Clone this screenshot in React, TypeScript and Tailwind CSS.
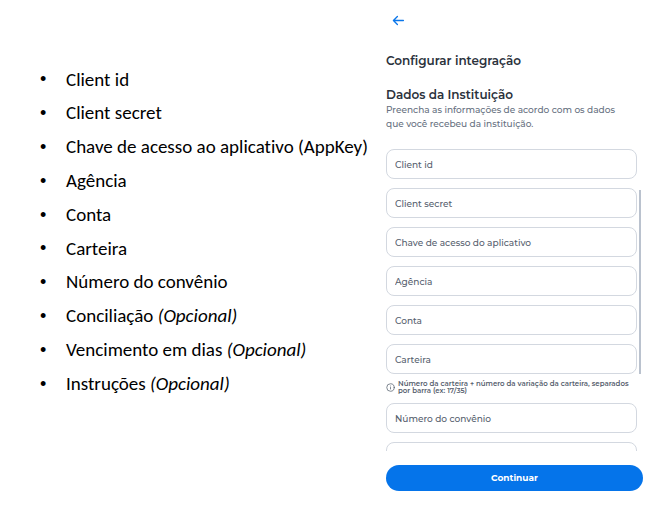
import { Info } from 'lucide-react';

const items: { text: string; optional?: boolean }[] = [
  { text: 'Client id' },
  { text: 'Client secret' },
  { text: 'Chave de acesso ao aplicativo (AppKey)' },
  { text: 'Agência' },
  { text: 'Conta' },
  { text: 'Carteira' },
  { text: 'Número do convênio' },
  { text: 'Conciliação', optional: true },
  { text: 'Vencimento em dias', optional: true },
  { text: 'Instruções', optional: true },
];

function Field({ label, hint }: { label: string; hint?: string }) {
  return (
    <div className="shrink-0">
      <input
        type="text"
        aria-label={label || 'Conciliação'}
        placeholder={label}
        className="block h-[30px] w-full rounded-lg border border-[#d3d8e0] bg-white px-2 text-[9px] font-medium text-[#56606e] placeholder:text-[#56606e] outline-none"
      />
      {hint && (
        <p className="flex items-center gap-[3px] pt-[6px] text-[7px] leading-[7px] font-semibold text-[#56606e]">
          <Info className="size-[9px] shrink-0" />
          <span>{hint}</span>
        </p>
      )}
    </div>
  );
}

export default function App() {
  return (
    <div className="flex h-screen bg-white">
      <ul className="grid h-[401px] min-w-0 flex-1 auto-rows-fr pt-[63px] pl-10 font-['Carlito','Lato',sans-serif] text-[19px] whitespace-nowrap text-black [font-variant-ligatures:none]">
        {items.map((item) => (
          <li key={item.text} className="flex items-center">
            <span className="w-[26px] font-['Liberation_Sans',sans-serif] text-[18px]">•</span>
            <span>
              {item.text}
              {item.optional && <em> (Opcional)</em>}
            </span>
          </li>
        ))}
      </ul>

      <main className="mr-[27px] flex w-[257px] shrink-0 flex-col pt-3 pb-[29px] font-['Montserrat','Inter',sans-serif]">
        <button type="button" aria-label="Voltar" className="ml-1 flex size-4 items-center justify-center text-[#0a76ea]">
          <svg viewBox="0 0 16 16" className="size-4" fill="none" stroke="currentColor" strokeWidth="1.3" strokeLinecap="round" strokeLinejoin="round">
            <path d="M13.4 8.5H3.4M7.4 4.5l-4 4 4 4" />
          </svg>
        </button>
        <h1 className="mt-[25px] text-[12px] leading-4 font-semibold text-[#2b323c]">Configurar integração</h1>
        <h2 className="mt-[18px] text-[12px] leading-4 font-semibold text-[#2b323c]">Dados da Instituição</h2>
        <p className="pr-4 text-[9px] leading-[14px] font-medium text-[#667080]">
          Preencha as informações de acordo com os dados que você recebeu da instituição.
        </p>

        <div className="relative mt-[15px] min-h-0 flex-1 overflow-hidden pt-[3px]">
          <form className="mr-[6px] flex flex-col gap-[9px]">
            <Field label="Client id" />
            <Field label="Client secret" />
            <Field label="Chave de acesso do aplicativo" />
            <Field label="Agência" />
            <Field label="Conta" />
            <Field
              label="Carteira"
              hint="Número da carteira + número da variação da carteira, separados por barra (ex: 17/35)"
            />
            <Field label="Número do convênio" />
            <Field label="" />
          </form>
          <div className="absolute top-11 right-[2px] h-[184px] w-[2px] bg-[#bac2ce]" />
        </div>

        <button
          type="button"
          className="mt-[14px] h-[26px] shrink-0 rounded-full bg-[#0574ea] text-[9px] font-bold text-white"
        >
          Continuar
        </button>
      </main>
    </div>
  );
}
